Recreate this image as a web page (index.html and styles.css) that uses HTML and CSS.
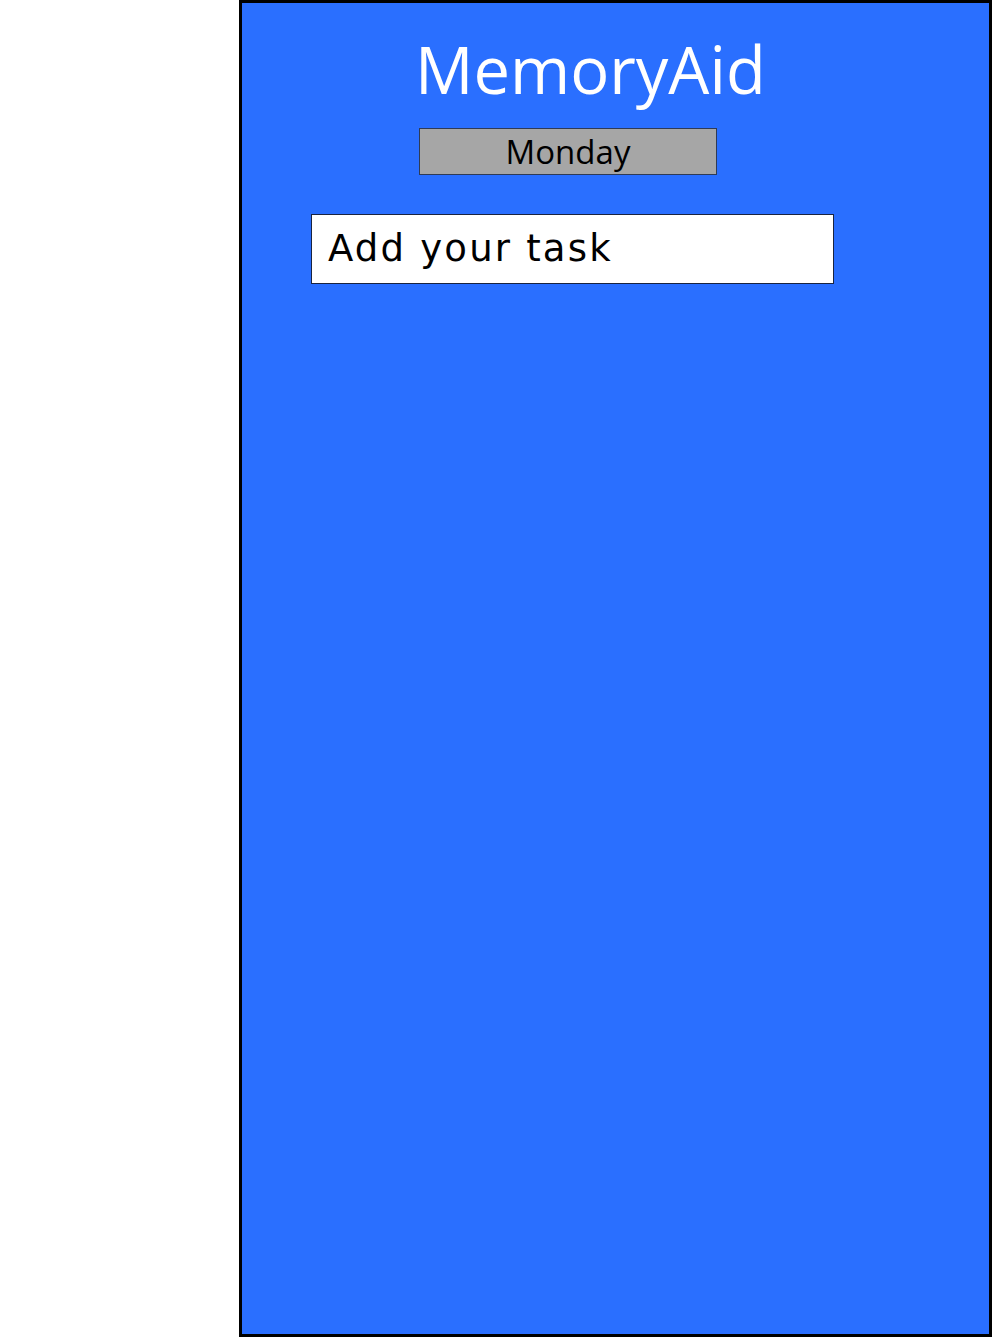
FILE: index.html
```html
<!DOCTYPE html>
<html>
<head>
<meta charset="utf-8">
<title>MemoryAid</title>
<link rel="stylesheet" href="styles.css">
</head>
<body>
<div class="page">
  <main class="panel">
    <h1 class="title">MemoryAid</h1>
    <div class="day">Monday</div>
    <div class="task-input">Add your task</div>
  </main>
</div>
</body>
</html>
```

FILE: styles.css
```css
html, body {
  margin: 0;
  padding: 0;
  background: #ffffff;
}
.page {
  display: flex;
  justify-content: flex-end;
  width: 992px;
  height: 1337px;
}
.panel {
  box-sizing: border-box;
  width: 753px;
  height: 1337px;
  background: #2a6fff;
  border: 3px solid #000000;
  display: flex;
  flex-direction: column;
  align-items: flex-start;
}
.title {
  margin: 34px 0 0 173px;
  font-family: "Open Sans", sans-serif;
  font-weight: 400;
  font-size: 65px;
  line-height: 65px;
  color: #ffffff;
}
.day {
  box-sizing: border-box;
  margin: 26px 0 0 177px;
  width: 298px;
  height: 47px;
  background: #a6a6a6;
  border: 1px solid #2f3b55;
  font-family: "Open Sans", sans-serif;
  font-size: 33px;
  line-height: 46px;
  color: #000000;
  text-align: center;
}
.task-input {
  box-sizing: border-box;
  margin: 39px 0 0 69px;
  width: 523px;
  height: 70px;
  background: #ffffff;
  border: 1px solid #1a2440;
  padding-left: 16px;
  font-family: "DejaVu Sans", sans-serif;
  font-size: 37px;
  letter-spacing: 2.2px;
  line-height: 68px;
  color: #000000;
}
```
